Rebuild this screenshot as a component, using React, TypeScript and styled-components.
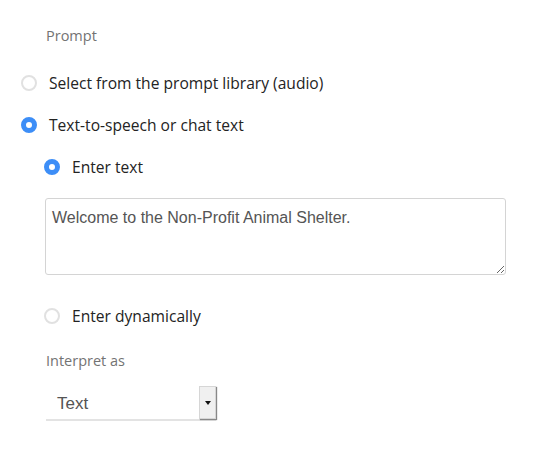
import { FC } from 'react'
import styled, { createGlobalStyle } from 'styled-components'

const GlobalStyle = createGlobalStyle`
  html, body {
    margin: 0;
    padding: 0;
    background: #fff;
  }
  body {
    font-family: 'Open Sans', sans-serif;
  }
`

const Wrapper = styled.div`
  width: 546px;
  height: 452px;
  padding: 26px 0 0 21px;
  box-sizing: border-box;
  display: flex;
  flex-direction: column;
`

const FieldLabel = styled.div<{ top?: number }>`
  margin-left: 25px;
  margin-top: ${({ top }) => top || 0}px;
  font-size: 14.5px;
  line-height: 20px;
  color: #737373;
`

const Group = styled.div<{ indent?: number }>`
  display: flex;
  flex-direction: column;
  padding-left: ${({ indent }) => indent || 0}px;
`

const Row = styled.label<{ top: number }>`
  display: flex;
  align-items: center;
  gap: 12px;
  margin-top: ${({ top }) => top}px;
  height: 22px;
  font-size: 15.6px;
  color: #232323;
  cursor: pointer;
`

const Radio = styled.span<{ checked?: boolean }>`
  width: 16px;
  height: 16px;
  border-radius: 50%;
  box-sizing: border-box;
  flex-shrink: 0;
  ${({ checked }) =>
    checked
      ? `
      background: #fff;
      border: 5px solid #3d8ef7;
    `
      : `
      background: #fff;
      border: 2px solid #e1e1e1;
    `}
`

const TextArea = styled.textarea`
  margin: 20px 0 0 1px;
  width: 461px;
  height: 77px;
  box-sizing: border-box;
  border: 1px solid #d4d4d4;
  border-radius: 3px;
  padding: 10px 6px 6px;
  font-family: 'Liberation Sans', Arial, sans-serif;
  font-size: 16px;
  color: #555;
  resize: both;
  outline: none;
`

const Select = styled.div`
  margin: 16px 0 0 25px;
  width: 170px;
  height: 34px;
  display: flex;
  align-items: stretch;
  border-bottom: 2px solid #e3e3e3;
  box-sizing: border-box;
`

const SelectValue = styled.div`
  flex: 1;
  display: flex;
  align-items: center;
  padding: 2px 0 0 11px;
  font-family: 'Liberation Sans', Arial, sans-serif;
  font-size: 17px;
  color: #555;
`

const SelectButton = styled.div`
  width: 17px;
  margin-top: -1px;
  display: flex;
  align-items: center;
  justify-content: center;
  background: #f0f0f0;
  border: 1px solid #d6d6d6;
  box-shadow: 1px 1px 1px #888;
  box-sizing: border-box;

  &::after {
    content: '';
    border-left: 3px solid transparent;
    border-right: 3px solid transparent;
    border-top: 4px solid #111;
  }
`

const App: FC = () => {
  return (
    <Wrapper>
      <GlobalStyle />
      <FieldLabel>Prompt</FieldLabel>
      <Row top={26}>
        <Radio />
        Select from the prompt library (audio)
      </Row>
      <Row top={20}>
        <Radio checked />
        Text-to-speech or chat text
      </Row>
      <Group indent={23}>
        <Row top={20}>
          <Radio checked />
          Enter text
        </Row>
        <TextArea defaultValue='Welcome to the Non-Profit Animal Shelter.' />
        <Row top={30}>
          <Radio />
          Enter dynamically
        </Row>
      </Group>
      <FieldLabel top={24}>Interpret as</FieldLabel>
      <Select>
        <SelectValue>Text</SelectValue>
        <SelectButton />
      </Select>
    </Wrapper>
  )
}

export default App
